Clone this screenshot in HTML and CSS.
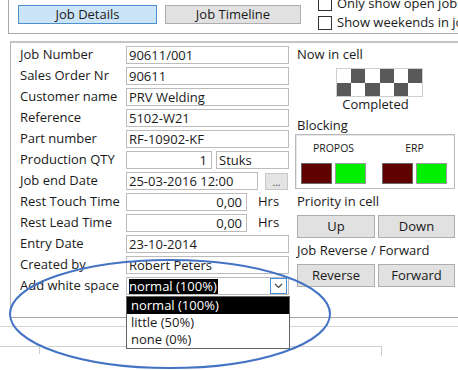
FILE: index.html
```html
<!DOCTYPE html>
<html>
<head>
<meta charset="utf-8">
<link rel="stylesheet" href="styles.css">
</head>
<body>
<div class="topbar">
  <div class="tab active">Job Details</div>
  <div class="tab">Job Timeline</div>
  <div class="checks">
    <div class="chk"><span class="box"></span>Only show open jobs</div>
    <div class="chk"><span class="box"></span>Show weekends in job timeline</div>
  </div>
</div>

<div class="panel">
  <div class="form">
    <div class="lbl">Job Number</div><div class="fld"><div class="inp full">90611/001</div></div>
    <div class="lbl">Sales Order Nr</div><div class="fld"><div class="inp full">90611</div></div>
    <div class="lbl">Customer name</div><div class="fld"><div class="inp full">PRV Welding</div></div>
    <div class="lbl">Reference</div><div class="fld"><div class="inp full">5102-W21</div></div>
    <div class="lbl">Part number</div><div class="fld"><div class="inp full">RF-10902-KF</div></div>
    <div class="lbl">Production QTY</div><div class="fld"><div class="inp qty num">1</div><div class="inp unit">Stuks</div></div>
    <div class="lbl">Job end Date</div><div class="fld"><div class="inp date">25-03-2016 12:00</div><div class="dots">...</div></div>
    <div class="lbl">Rest Touch Time</div><div class="fld"><div class="inp hrs num">0,00</div><span class="suffix">Hrs</span></div>
    <div class="lbl">Rest Lead Time</div><div class="fld"><div class="inp hrs num">0,00</div><span class="suffix">Hrs</span></div>
    <div class="lbl">Entry Date</div><div class="fld"><div class="inp full">23-10-2014</div></div>
    <div class="lbl">Created by</div><div class="fld"><div class="inp full">Robert Peters</div></div>
    <div class="lbl">Add white space</div>
    <div class="fld">
      <div class="combo">
        <span class="sel">normal (100%)</span>
        <span class="arrow"><svg width="9" height="6" viewBox="0 0 9 6"><path d="M1 1 L4.5 4.5 L8 1" fill="none" stroke="#444" stroke-width="1.2"/></svg></span>
        <div class="list">
          <div class="opt on">normal (100%)</div>
          <div class="opt">little (50%)</div>
          <div class="opt">none (0%)</div>
        </div>
      </div>
    </div>
  </div>

  <div class="side">
    <div class="head">Now in cell</div>
    <div class="checker">
      <span></span><span class="d"></span><span></span><span class="d"></span><span></span><span class="d"></span>
      <span class="d"></span><span></span><span class="d"></span><span></span><span class="d"></span><span></span>
    </div>
    <div class="status">Completed</div>
    <div class="head blk">Blocking</div>
    <div class="blockbox">
      <div class="grp">
        <div class="gl">PROPOS</div>
        <div class="sq"><span class="red"></span><span class="green"></span></div>
      </div>
      <div class="grp">
        <div class="gl">ERP</div>
        <div class="sq"><span class="red"></span><span class="green"></span></div>
      </div>
    </div>
    <div class="head sec">Priority in cell</div>
    <div class="btns"><div class="btn">Up</div><div class="btn">Down</div></div>
    <div class="head sec">Job Reverse / Forward</div>
    <div class="btns"><div class="btn">Reverse</div><div class="btn">Forward</div></div>
  </div>
</div>

<div class="sep"></div>
<div class="gridhead"><div class="stub"></div><div class="hcell"></div></div>

<svg class="annot" width="458" height="370" viewBox="0 0 458 370">
  <ellipse cx="170" cy="314" rx="160" ry="54" fill="none" stroke="#4472c4" stroke-width="2"/>
</svg>
</body>
</html>
```

FILE: styles.css
```css
* { box-sizing: border-box; }
html, body { margin: 0; padding: 0; }
body {
  width: 458px;
  height: 370px;
  overflow: hidden;
  position: relative;
  background: #fff;
  font-family: "Open Sans", "Noto Sans", sans-serif;
  font-size: 13px;
  color: #1a1a1a;
  white-space: nowrap;
}

/* top bar */
.topbar {
  margin-left: 8px;
  width: 450px;
  height: 34px;
  border-left: 1px solid #a8a8a8;
  border-bottom: 1px solid #a8a8a8;
  display: flex;
  align-items: flex-start;
  padding-left: 9px;
  overflow: hidden;
}
.tab {
  flex: none;
  margin-top: 5px;
  height: 19px;
  width: 139px;
  border: 1px solid #adadad;
  background: #e1e1e1;
  text-align: center;
  line-height: 17px;
}
.tab + .tab { margin-left: 8px; width: 136px; }
.tab.active { background: #cce4f7; border-color: #4d8fd0; }
.checks {
  flex: none;
  margin-left: 17px;
  margin-top: -6px;
  display: flex;
  flex-direction: column;
}
.chk {
  height: 19px;
  display: flex;
  align-items: center;
  line-height: 19px;
}
.box {
  width: 14px;
  height: 14px;
  border: 1px solid #333;
  background: #fff;
  margin-right: 5px;
  flex: none;
}

/* main panel */
.panel {
  margin-top: 7px;
  margin-left: 10px;
  width: 448px;
  height: 277px;
  border-top: 2px solid #c4c4c4;
  border-left: 1px solid #b4b4b4;
  border-bottom: 1px solid #a8a8a8;
  display: flex;
  align-items: flex-start;
}
.form {
  flex: none;
  padding: 3px 0 0 9px;
  display: grid;
  grid-template-columns: 106px 163px;
  grid-auto-rows: 18px;
  row-gap: 3px;
}
.lbl { line-height: 17px; }
.fld { display: flex; align-items: flex-start; }
.inp {
  flex: none;
  height: 18px;
  border: 1px solid #bcbcbc;
  background: #fff;
  line-height: 16px;
  padding: 0 3px 0 2px;
  overflow: hidden;
}
.inp.full { width: 163px; }
.inp.num { text-align: right; padding-right: 4px; }
.inp.qty { width: 86px; }
.inp.unit { width: 73px; margin-left: 4px; }
.inp.date { width: 132px; }
.dots {
  flex: none;
  margin-left: 7px;
  margin-top: 1px;
  width: 23px;
  height: 17px;
  border: 1px solid #c8c8c8;
  background: #e4e4e4;
  text-align: center;
  font-size: 10px;
  line-height: 16px;
  color: #444;
}
.inp.hrs { width: 121px; }
.suffix { margin-left: 11px; line-height: 17px; }

.combo {
  position: relative;
  width: 163px;
  height: 18px;
  border: 1px solid #bcbcbc;
  display: flex;
  align-items: center;
  padding-left: 2px;
}
.sel {
  background: #000;
  color: #fff;
  line-height: 15px;
  padding-right: 1px;
}
.arrow {
  margin-left: auto;
  margin-right: 1px;
  width: 17px;
  height: 16px;
  border: 1px solid #4a90d8;
  display: flex;
  align-items: center;
  justify-content: center;
}
.list {
  position: absolute;
  left: -1px;
  top: 18px;
  width: 164px;
  border: 1px solid #646464;
  background: #fff;
  z-index: 2;
}
.opt {
  height: 17px;
  line-height: 17px;
  padding-left: 4px;
}
.opt.on { background: #000; color: #fff; }

/* right side */
.side {
  flex: none;
  margin-left: 6px;
  width: 160px;
  display: flex;
  flex-direction: column;
}
.head { line-height: 17px; margin-top: 3px; padding-left: 2px; }
.checker {
  margin-top: 5px;
  margin-left: 41px;
  width: 87px;
  height: 29px;
  border: 1px solid #cfcfcf;
  display: grid;
  grid-template-columns: repeat(6, 1fr);
  grid-template-rows: 1fr 1fr;
}
.checker span { background: #fff; }
.checker span.d { background: #595959; }
.status { text-align: center; line-height: 15px; margin-top: 0; padding-left: 1px; }
.head.blk { margin-top: 6px; line-height: 15px; }
.blockbox {
  margin-top: 1px;
  height: 55px;
  width: 160px;
  border: 1px solid #b8b8b8;
  box-shadow: inset 1px 1px 0 #e8e8e8;
  display: flex;
  padding: 0 0 0 5px;
  gap: 16px;
}
.grp { display: flex; flex-direction: column; align-items: center; }
.gl { font-size: 10.5px; line-height: 14px; margin-top: 6px; height: 22px; }
.sq { display: flex; gap: 3px; }
.sq span { width: 31px; height: 21px; border: 1px solid #6a6a6a; }
.sq .red { background: #600000; }
.sq .green { background: #00f000; border-color: #9a9a9a; }
.head.sec { margin-top: 4px; line-height: 17px; }
.btns { display: flex; gap: 3px; margin-top: 5px; padding-left: 2px; }
.btn {
  width: 78px;
  height: 23px;
  border: 1px solid #adadad;
  background: #e1e1e1;
  text-align: center;
  line-height: 21px;
}
.btn + .btn { width: 77px; }

/* below panel */
.sep {
  margin-top: 8px;
  border-top: 1px solid #d4d4d4;
}
.gridhead { display: flex; margin-top: 19px; }
.stub { width: 40px; height: 8px; border-top: 1px solid #cfcfcf; border-right: 1px solid #cfcfcf; }
.hcell { margin-left: 8px; width: 334px; height: 10px; border-top: 1px solid #cfcfcf; border-right: 1px solid #cfcfcf; }

.annot { position: absolute; left: 0; top: 0; pointer-events: none; z-index: 5; }
```
